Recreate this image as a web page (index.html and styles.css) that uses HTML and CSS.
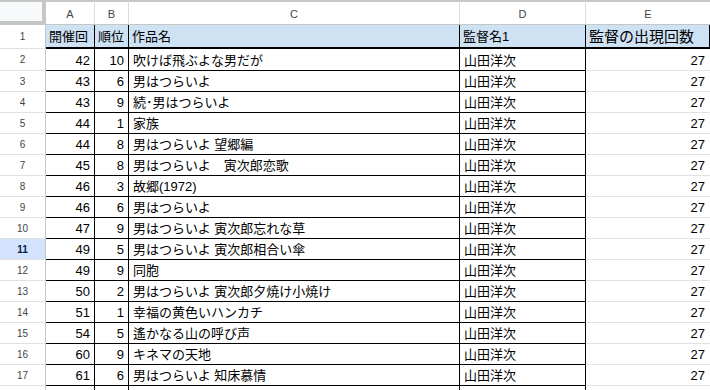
FILE: index.html
```html
<!DOCTYPE html>
<html lang="ja">
<head>
<meta charset="utf-8">
<title>Sheet</title>
<link rel="stylesheet" href="styles.css">
</head>
<body>
<div class="sheet" id="sheet">
  <div class="corner"></div>
  <div class="ch">A</div>
  <div class="ch">B</div>
  <div class="ch">C</div>
  <div class="ch">D</div>
  <div class="ch last">E</div>

  <div class="rh">1</div>
  <div class="hd">開催回</div>
  <div class="hd">順位</div>
  <div class="hd">作品名</div>
  <div class="hd">監督名1</div>
  <div class="hd big">監督の出現回数</div>
</div>
<script src="app.js"></script>
</body>
</html>
```
FILE: app.js
```js
const rows = [
  [42, 10, "吹けば飛ぶよな男だが"],
  [43, 6, "男はつらいよ"],
  [43, 9, "続･男はつらいよ"],
  [44, 1, "家族"],
  [44, 8, "男はつらいよ 望郷編"],
  [45, 8, "男はつらいよ　寅次郎恋歌"],
  [46, 3, "故郷(1972)"],
  [46, 6, "男はつらいよ"],
  [47, 9, "男はつらいよ 寅次郎忘れな草"],
  [49, 5, "男はつらいよ 寅次郎相合い傘"],
  [49, 9, "同胞"],
  [50, 2, "男はつらいよ 寅次郎夕焼け小焼け"],
  [51, 1, "幸福の黄色いハンカチ"],
  [54, 5, "遙かなる山の呼び声"],
  [60, 9, "キネマの天地"],
  [61, 6, "男はつらいよ 知床慕情"]
];
const sheet = document.getElementById("sheet");
function cell(cls, text) {
  const d = document.createElement("div");
  d.className = cls;
  d.textContent = text;
  sheet.appendChild(d);
}
rows.forEach((r, i) => {
  const n = i + 2;
  cell(n === 11 ? "rh sel" : "rh", String(n));
  cell("c num", String(r[0]));
  cell("c num", String(r[1]));
  cell("c", r[2]);
  cell("c", "山田洋次");
  cell("e", "27");
});
cell("rh", "");
cell("c num", "");
cell("c num", "");
cell("c", "");
cell("c", "");
cell("e", "");
```
FILE: styles.css
```css
html, body {
  margin: 0;
  padding: 0;
  background: #fff;
  overflow: hidden;
}
.sheet {
  display: grid;
  grid-template-columns: 46px 49px 34px 331px 126px 124px;
  grid-template-rows: 25px 24px 22px repeat(15, 21px) 21px;
  font-family: "Liberation Sans", "Noto Sans CJK JP", sans-serif;
  font-size: 13px;
  color: #000;
}
.sheet > div {
  box-sizing: border-box;
  white-space: nowrap;
  overflow: hidden;
}
.corner {
  background: #f8f9fa;
  border-top: 2px solid #c4c7c5;
  border-right: 4px solid #c4c7c5;
  border-bottom: 4px solid #c4c7c5;
}
.ch {
  background: #fff;
  border-top: 2px solid #c4c7c5;
  border-bottom: 1px solid #c4c7c5;
  border-right: 1px solid #dadce0;
  display: flex;
  align-items: center;
  justify-content: center;
  font-size: 11px;
  color: #444;
  padding-top: 1px;
}
.ch.last {
  border-right: none;
}
.rh {
  background: #fff;
  border-right: 1px solid #c4c7c5;
  border-bottom: 1px solid #e1e1e1;
  display: flex;
  align-items: center;
  justify-content: center;
  font-size: 10px;
  color: #444;
}
.rh.sel {
  background: #d3e3fd;
  color: #041e49;
  font-weight: bold;
}
.hd {
  background: #cfe2f3;
  border-right: 1px solid #000;
  border-bottom: 2px solid #000;
  display: flex;
  align-items: flex-end;
  padding: 0 3px 2px 3px;
  line-height: 17px;
}
.hd.big {
  font-size: 15px;
  line-height: 19px;
  padding-bottom: 1px;
  border-right: 1px solid #000;
}
.c {
  border-right: 1px solid #000;
  border-bottom: 1px solid #000;
  display: flex;
  align-items: flex-end;
  padding: 0 4px 2px 4px;
  line-height: 15px;
}
.c.num {
  justify-content: flex-end;
}
.e {
  border-bottom: 1px solid #e2e3e3;
  display: flex;
  align-items: flex-end;
  justify-content: flex-end;
  padding: 0 5px 2px 4px;
  line-height: 15px;
}
```
